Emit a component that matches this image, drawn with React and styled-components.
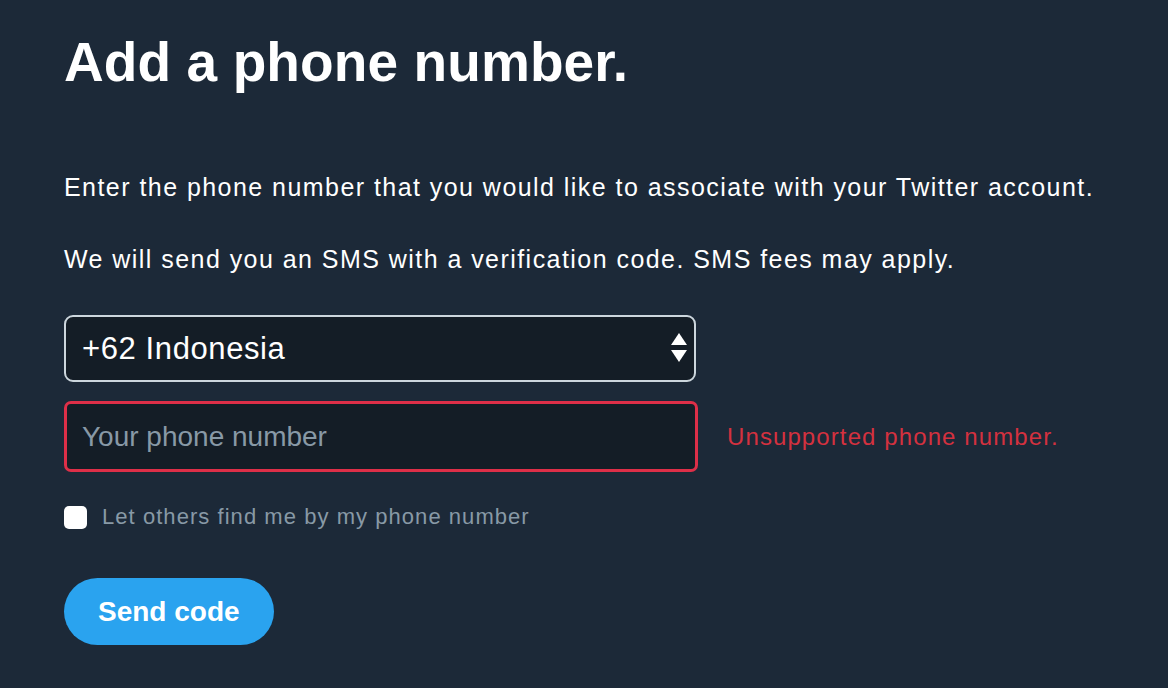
import React from "react";
import styled, { createGlobalStyle } from "styled-components";

const Global = createGlobalStyle`
  html, body { margin: 0; padding: 0; background: #1c2938; }
  body { font-family: "Liberation Sans", Arial, Helvetica, sans-serif; }
  * { box-sizing: border-box; }
`;

const Page = styled.div`
  min-height: 688px;
  background: #1c2938;
  padding: 29px 0 0 64px;
  color: #ffffff;
`;

const Title = styled.h1`
  margin: 0;
  font-size: 55px;
  line-height: 66px;
  font-weight: 700;
  letter-spacing: 0.1px;
`;

const Text = styled.p`
  margin: ${(p) => p.$mt}px 0 0 0;
  font-size: 25px;
  line-height: 29px;
  letter-spacing: 1.45px;
  color: #ffffff;
`;

const SelectWrap = styled.div`
  position: relative;
  width: 632px;
  margin-top: 41px;
`;

const Select = styled.select`
  appearance: none;
  -webkit-appearance: none;
  width: 100%;
  height: 67px;
  background: #141d26;
  border: 2px solid #ccd6dd;
  border-radius: 9px;
  color: #ffffff;
  font-family: inherit;
  font-size: 31px;
  letter-spacing: 0.6px;
  padding: 0 16px;
  outline: none;
`;

const Arrows = styled.svg`
  position: absolute;
  right: 9px;
  top: 18px;
  pointer-events: none;
`;

const Row = styled.div`
  display: flex;
  align-items: center;
  margin-top: 19px;
`;

const Input = styled.input`
  width: 634px;
  height: 71px;
  background: #141d26;
  border: 3px solid #de2f48;
  border-radius: 7px;
  color: #ffffff;
  font-family: inherit;
  font-size: 28px;
  padding: 0 15px;
  outline: none;
  &::placeholder { color: #8899a6; }
`;

const Error = styled.span`
  margin-left: 29px;
  font-size: 24px;
  letter-spacing: 1.1px;
  color: #d4313f;
`;

const CheckRow = styled.label`
  display: flex;
  align-items: center;
  margin-top: 32px;
  gap: 15px;
`;

const Check = styled.input`
  appearance: none;
  -webkit-appearance: none;
  margin: 0;
  width: 23px;
  height: 23px;
  background: #ffffff;
  border-radius: 5px;
`;

const CheckLabel = styled.span`
  font-size: 22px;
  letter-spacing: 1.05px;
  color: #8899a6;
`;

const Button = styled.button`
  margin-top: 48px;
  height: 67px;
  padding: 0 34px;
  border: none;
  border-radius: 34px;
  background: #2aa3ef;
  color: #ffffff;
  font-family: inherit;
  font-weight: 700;
  font-size: 28px;
`;

export default function App() {
  return (
    <Page>
      <Global />
      <Title>Add a phone number.</Title>
      <Text $mt={78}>
        Enter the phone number that you would like to associate with your Twitter account.
      </Text>
      <Text $mt={43}>
        We will send you an SMS with a verification code. SMS fees may apply.
      </Text>
      <SelectWrap>
        <Select defaultValue="62">
          <option value="62">+62 Indonesia</option>
        </Select>
        <Arrows width="16" height="30" viewBox="0 0 16 30">
          <polygon points="8,0 16,12 0,12" fill="#ffffff" />
          <polygon points="0,17 16,17 8,29" fill="#ffffff" />
        </Arrows>
      </SelectWrap>
      <Row>
        <Input placeholder="Your phone number" />
        <Error>Unsupported phone number.</Error>
      </Row>
      <CheckRow>
        <Check type="checkbox" />
        <CheckLabel>Let others find me by my phone number</CheckLabel>
      </CheckRow>
      <Button>Send code</Button>
    </Page>
  );
}
